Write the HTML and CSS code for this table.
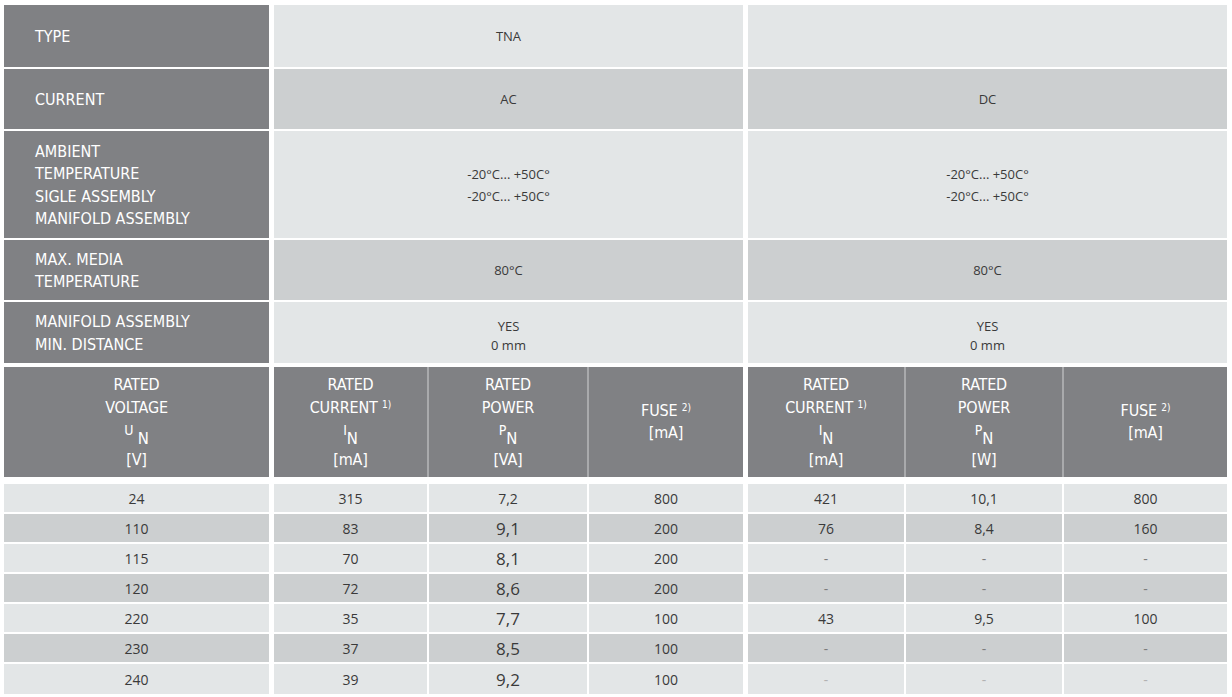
FILE: index.html
```html
<!DOCTYPE html>
<html>
<head>
<meta charset="utf-8">
<title>TNA</title>
<link rel="stylesheet" href="styles.css">
</head>
<body>
<div class="table">
  <div class="top">
    <div class="row r1 light">
      <div class="label">TYPE</div>
      <div class="val">TNA</div>
      <div class="val"></div>
    </div>
    <div class="row r2 dark">
      <div class="label">CURRENT</div>
      <div class="val">AC</div>
      <div class="val">DC</div>
    </div>
    <div class="row r3 light">
      <div class="label">AMBIENT<br>TEMPERATURE<br>SIGLE ASSEMBLY<br>MANIFOLD ASSEMBLY</div>
      <div class="val">-20°C... +50C°<br>-20°C... +50C°</div>
      <div class="val">-20°C... +50C°<br>-20°C... +50C°</div>
    </div>
    <div class="row r4 dark">
      <div class="label">MAX. MEDIA<br>TEMPERATURE</div>
      <div class="val">80°C</div>
      <div class="val">80°C</div>
    </div>
    <div class="row r5 light">
      <div class="label">MANIFOLD ASSEMBLY<br>MIN. DISTANCE</div>
      <div class="val tight">YES<br>0 mm</div>
      <div class="val tight">YES<br>0 mm</div>
    </div>
  </div>

  <div class="row head">
    <div class="hcell">
      <div class="ln">RATED</div>
      <div class="ln">VOLTAGE</div>
      <div class="ln un"><span class="sym">U</span>&nbsp;<span class="idx">N</span></div>
      <div class="ln">[V]</div>
    </div>
    <div class="hgroup ac">
      <div class="hcell">
        <div class="ln">RATED</div>
        <div class="ln">CURRENT <span class="fn">1)</span></div>
        <div class="ln un"><span class="sym">I</span><span class="idx">N</span></div>
        <div class="ln">[mA]</div>
      </div>
      <div class="hcell">
        <div class="ln">RATED</div>
        <div class="ln">POWER</div>
        <div class="ln un"><span class="sym">P</span><span class="idx">N</span></div>
        <div class="ln">[VA]</div>
      </div>
      <div class="hcell">
        <div class="ln s">FUSE <span class="fn">2)</span></div>
        <div class="ln s">[mA]</div>
      </div>
    </div>
    <div class="hgroup dc">
      <div class="hcell">
        <div class="ln">RATED</div>
        <div class="ln">CURRENT <span class="fn">1)</span></div>
        <div class="ln un"><span class="sym">I</span><span class="idx">N</span></div>
        <div class="ln">[mA]</div>
      </div>
      <div class="hcell">
        <div class="ln">RATED</div>
        <div class="ln">POWER</div>
        <div class="ln un"><span class="sym">P</span><span class="idx">N</span></div>
        <div class="ln">[W]</div>
      </div>
      <div class="hcell">
        <div class="ln s">FUSE <span class="fn">2)</span></div>
        <div class="ln s">[mA]</div>
      </div>
    </div>
  </div>

  <div class="body">
    <div class="row drow light">
      <div class="dcell">24</div>
      <div class="dgroup ac"><div class="dcell">315</div><div class="dcell">7,2</div><div class="dcell">800</div></div>
      <div class="dgroup dc"><div class="dcell">421</div><div class="dcell">10,1</div><div class="dcell">800</div></div>
    </div>
    <div class="row drow dark">
      <div class="dcell">110</div>
      <div class="dgroup ac"><div class="dcell">83</div><div class="dcell big">9,1</div><div class="dcell">200</div></div>
      <div class="dgroup dc"><div class="dcell">76</div><div class="dcell">8,4</div><div class="dcell">160</div></div>
    </div>
    <div class="row drow light">
      <div class="dcell">115</div>
      <div class="dgroup ac"><div class="dcell">70</div><div class="dcell big">8,1</div><div class="dcell">200</div></div>
      <div class="dgroup dc"><div class="dcell dash">-</div><div class="dcell dash">-</div><div class="dcell dash">-</div></div>
    </div>
    <div class="row drow dark">
      <div class="dcell">120</div>
      <div class="dgroup ac"><div class="dcell">72</div><div class="dcell big">8,6</div><div class="dcell">200</div></div>
      <div class="dgroup dc"><div class="dcell dash">-</div><div class="dcell dash">-</div><div class="dcell dash">-</div></div>
    </div>
    <div class="row drow light">
      <div class="dcell">220</div>
      <div class="dgroup ac"><div class="dcell">35</div><div class="dcell big">7,7</div><div class="dcell">100</div></div>
      <div class="dgroup dc"><div class="dcell">43</div><div class="dcell">9,5</div><div class="dcell">100</div></div>
    </div>
    <div class="row drow dark">
      <div class="dcell">230</div>
      <div class="dgroup ac"><div class="dcell">37</div><div class="dcell big">8,5</div><div class="dcell">100</div></div>
      <div class="dgroup dc"><div class="dcell dash">-</div><div class="dcell dash">-</div><div class="dcell dash">-</div></div>
    </div>
    <div class="row drow light last">
      <div class="dcell">240</div>
      <div class="dgroup ac"><div class="dcell">39</div><div class="dcell big">9,2</div><div class="dcell">100</div></div>
      <div class="dgroup dc"><div class="dcell dash faint">-</div><div class="dcell dash faint">-</div><div class="dcell dash faint">-</div></div>
    </div>
  </div>
</div>
</body>
</html>
```

FILE: styles.css
```css
html, body {
  background: #ffffff;
}
body {
  margin: 5px 0 0 4px;
  font-family: "Open Sans", "Liberation Sans", sans-serif;
  color: #3a3a3a;
}
.table {
  display: flex;
  flex-direction: column;
  width: 1223px;
}
.top {
  display: flex;
  flex-direction: column;
  gap: 2px;
}
.row {
  display: grid;
  grid-template-columns: 265px 469px 479px;
  column-gap: 5px;
}
.r1 { height: 62px; }
.r2 { height: 60px; }
.r3 { height: 107px; }
.r4 { height: 60px; }
.r5 { height: 61px; }

.label {
  background: #808184;
  color: #ffffff;
  font-family: "Liberation Sans Narrow", "DejaVu Sans Condensed", "Liberation Sans", sans-serif;
  font-size: 16px;
  letter-spacing: 0;
  line-height: 22.5px;
  padding-left: 31px;
  padding-top: 2px;
  box-sizing: border-box;
  display: flex;
  align-items: center;
}
.val {
  display: flex;
  align-items: center;
  justify-content: center;
  text-align: center;
  font-size: 13px;
  line-height: 22px;
  color: #3a3a3a;
}
.val.tight { line-height: 19px; padding-top: 6px; box-sizing: border-box; }
.light .val, .light .dcell { background: #e3e6e7; }
.dark .val, .dark .dcell { background: #cccfd0; }

/* header */
.head {
  margin-top: 4px;
  height: 110px;
}
.hgroup {
  display: grid;
  column-gap: 2px;
  background: #a9aaac;
}
.ac { grid-template-columns: 153px 158px 154px; }
.dc { grid-template-columns: 156px 156px 163px; }
.hcell {
  background: #808184;
  color: #ffffff;
  font-family: "Liberation Sans Narrow", "DejaVu Sans Condensed", "Liberation Sans", sans-serif;
  font-size: 16px;
  letter-spacing: -0.2px;
  display: flex;
  flex-direction: column;
  justify-content: center;
  align-items: center;
  text-align: center;
}
.ln {
  line-height: 23px;
  white-space: nowrap;
}
.ln.s { line-height: 22px; }
.ln.un {
  height: 29px;
  line-height: 29px;
}
.sym {
  font-size: 14px;
  vertical-align: 4px;
  line-height: 0;
}
.idx {
  font-size: 16.5px;
  vertical-align: -5px;
  line-height: 0;
}
.fn {
  font-size: 10px;
  vertical-align: 5px;
  line-height: 0;
  letter-spacing: 0;
}

/* body */
.body {
  margin-top: 7px;
  display: flex;
  flex-direction: column;
  gap: 2px;
}
.drow { height: 28px; }
.dgroup {
  display: grid;
  column-gap: 2px;
}
.dcell {
  display: flex;
  align-items: center;
  justify-content: center;
  font-size: 14px;
  color: #3a3a3a;
}
.dcell.big { font-size: 17px; }
.dcell.dash { color: #7d7d7d; }
.dcell.faint { color: #b2b2b2; }
.last { height: 30px; }
```
